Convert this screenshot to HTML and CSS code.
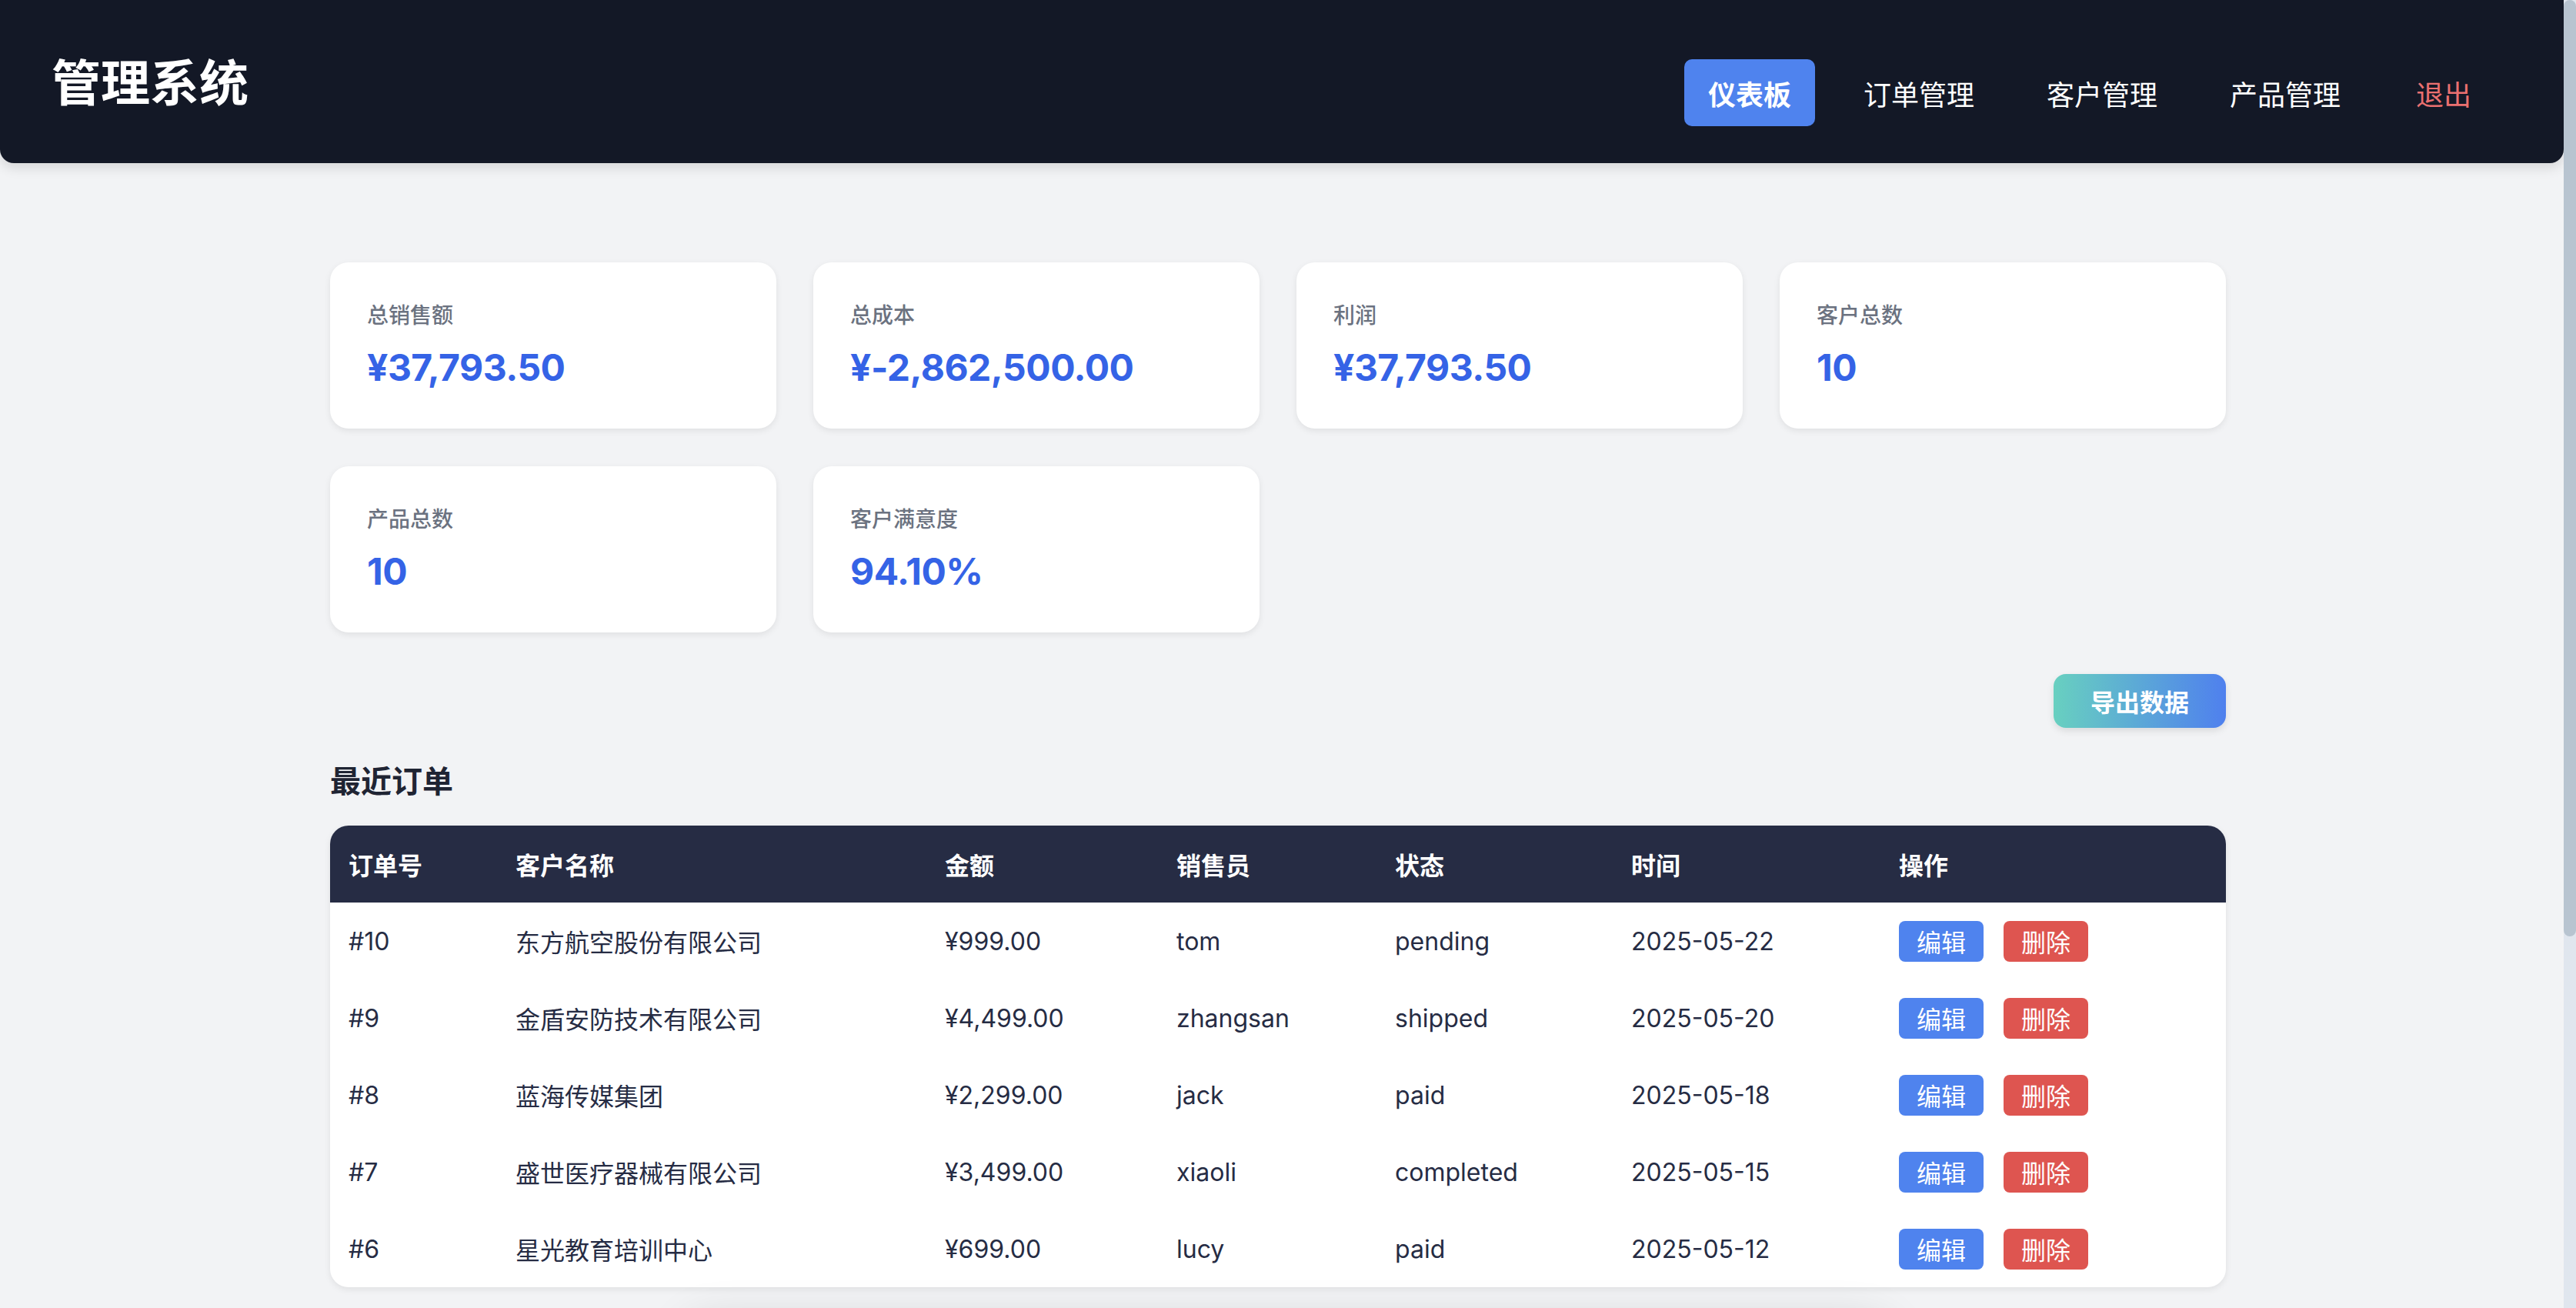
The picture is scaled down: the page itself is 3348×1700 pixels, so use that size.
FILE: index.html
```html
<!DOCTYPE html>
<html lang="zh-CN">
<head>
<meta charset="utf-8">
<title>管理系统</title>
<link rel="stylesheet" href="styles.css">
</head>
<body>
<header class="topbar">
  <h1 class="brand">管理系统</h1>
  <nav class="nav">
    <a class="nav-link active" href="#">仪表板</a>
    <a class="nav-link" href="#">订单管理</a>
    <a class="nav-link" href="#">客户管理</a>
    <a class="nav-link" href="#">产品管理</a>
    <a class="nav-link logout" href="#">退出</a>
  </nav>
</header>

<main class="main">
  <section class="stats">
    <div class="stat-card"><div class="stat-label">总销售额</div><div class="stat-value">¥37,793.50</div></div>
    <div class="stat-card"><div class="stat-label">总成本</div><div class="stat-value">¥-2,862,500.00</div></div>
    <div class="stat-card"><div class="stat-label">利润</div><div class="stat-value">¥37,793.50</div></div>
    <div class="stat-card"><div class="stat-label">客户总数</div><div class="stat-value">10</div></div>
    <div class="stat-card"><div class="stat-label">产品总数</div><div class="stat-value">10</div></div>
    <div class="stat-card"><div class="stat-label">客户满意度</div><div class="stat-value">94.10%</div></div>
  </section>

  <div class="toolbar">
    <button class="export-btn">导出数据</button>
  </div>

  <h2 class="section-title">最近订单</h2>

  <table class="orders">
    <thead>
      <tr>
        <th>订单号</th><th>客户名称</th><th>金额</th><th>销售员</th><th>状态</th><th>时间</th><th>操作</th>
      </tr>
    </thead>
    <tbody>
      <tr><td>#10</td><td>东方航空股份有限公司</td><td>¥999.00</td><td>tom</td><td>pending</td><td>2025-05-22</td><td><button class="btn btn-edit">编辑</button><button class="btn btn-delete">删除</button></td></tr>
      <tr><td>#9</td><td>金盾安防技术有限公司</td><td>¥4,499.00</td><td>zhangsan</td><td>shipped</td><td>2025-05-20</td><td><button class="btn btn-edit">编辑</button><button class="btn btn-delete">删除</button></td></tr>
      <tr><td>#8</td><td>蓝海传媒集团</td><td>¥2,299.00</td><td>jack</td><td>paid</td><td>2025-05-18</td><td><button class="btn btn-edit">编辑</button><button class="btn btn-delete">删除</button></td></tr>
      <tr><td>#7</td><td>盛世医疗器械有限公司</td><td>¥3,499.00</td><td>xiaoli</td><td>completed</td><td>2025-05-15</td><td><button class="btn btn-edit">编辑</button><button class="btn btn-delete">删除</button></td></tr>
      <tr><td>#6</td><td>星光教育培训中心</td><td>¥699.00</td><td>lucy</td><td>paid</td><td>2025-05-12</td><td><button class="btn btn-edit">编辑</button><button class="btn btn-delete">删除</button></td></tr>
    </tbody>
  </table>
</main>

<div class="bottom-panel"></div>

<div class="scrollbar"><div class="scrollbar-thumb"></div></div>
</body>
</html>
```

FILE: styles.css
```css
html {
  background: #f2f3f5;
}

body {
  margin: 0 16px 0 0;
  background: #f2f3f5;
  font-family: "Inter", "Noto Sans CJK SC", sans-serif;
  color: #262c44;
}

.topbar {
  display: flex;
  justify-content: space-between;
  align-items: flex-start;
  height: 212px;
  box-sizing: border-box;
  padding: 65px 89px 0 67px;
  background: #131826;
  border-radius: 0 0 18px 18px;
  box-shadow: 0 6px 16px rgba(0, 0, 0, 0.12);
}

.brand {
  margin: 0;
  font-size: 64px;
  line-height: 77px;
  font-weight: 700;
  color: #ffffff;
  font-family: "Noto Sans CJK SC", sans-serif;
}

.nav {
  display: flex;
  gap: 32px;
  margin-top: 12px;
}

.nav-link {
  display: flex;
  align-items: center;
  height: 87px;
  padding: 0 31px;
  font-size: 36px;
  color: #ffffff;
  text-decoration: none;
  border-radius: 10px;
  font-family: "Noto Sans CJK SC", sans-serif;
}

.nav-link.active {
  background: #4f83ee;
  font-weight: 700;
}

.nav-link.logout {
  margin-left: 4px;
  color: #ea7070;
}

.main {
  width: 2464px;
  margin-left: 429px;
  padding: 129px 0 700px;
}

.stats {
  display: grid;
  grid-template-columns: repeat(4, 1fr);
  gap: 49px 48px;
}

.stat-card {
  background: #ffffff;
  border-radius: 24px;
  padding: 46px 48px 48px;
  height: 216px;
  box-sizing: border-box;
  box-shadow: 0 3px 8px rgba(0, 0, 0, 0.08);
}

.stat-label {
  font-size: 28px;
  line-height: 42px;
  color: #6b7280;
  font-weight: 500;
  font-family: "Noto Sans CJK SC Medium", "Noto Sans CJK SC", sans-serif;
}

.stat-value {
  margin-top: 20px;
  font-size: 48px;
  line-height: 58px;
  font-weight: 700;
  color: #3563e6;
  letter-spacing: -0.5px;
}

.toolbar {
  display: flex;
  justify-content: flex-end;
  margin-top: 54px;
}

.export-btn {
  width: 224px;
  height: 70px;
  border: none;
  border-radius: 16px;
  background: linear-gradient(90deg, #68d0c0 0%, #4f80ee 100%);
  color: #ffffff;
  font-size: 32px;
  font-weight: 700;
  font-family: "Noto Sans CJK SC", sans-serif;
  box-shadow: 0 4px 10px rgba(0, 0, 0, 0.1);
  padding: 0;
}

.section-title {
  margin: 39px 0 32px;
  font-size: 40px;
  line-height: 56px;
  font-weight: 700;
  color: #1f2433;
  font-family: "Noto Sans CJK SC", sans-serif;
}

.orders {
  width: 100%;
  border-collapse: separate;
  border-spacing: 0;
  background: #ffffff;
  border-radius: 24px;
  overflow: hidden;
  table-layout: fixed;
  box-shadow: 0 3px 8px rgba(0, 0, 0, 0.08);
}

.orders th,
.orders td {
  height: 100px;
  padding: 0 24px;
  text-align: left;
  vertical-align: middle;
  font-size: 32px;
  white-space: nowrap;
}

.orders th {
  background: #262c44;
  color: #ffffff;
  font-weight: 700;
  font-family: "Noto Sans CJK SC", sans-serif;
}

.orders td {
  color: #262c44;
  font-weight: 400;
}

.orders th:nth-child(1) { width: 169px; }
.orders th:nth-child(2) { width: 510px; }
.orders th:nth-child(3) { width: 253px; }
.orders th:nth-child(4) { width: 236px; }
.orders th:nth-child(5) { width: 259px; }
.orders th:nth-child(6) { width: 300px; }

.btn {
  height: 53px;
  padding: 0 23px;
  margin-right: 26px;
  border: none;
  border-radius: 8px;
  color: #ffffff;
  font-size: 32px;
  line-height: 53px;
  font-family: "Noto Sans CJK SC", sans-serif;
  vertical-align: middle;
}

.btn-edit {
  background: #4f83ee;
}

.btn-delete {
  background: #de5550;
}

.bottom-panel {
  position: fixed;
  left: 50%;
  bottom: -140px;
  transform: translateX(-50%);
  width: 1560px;
  height: 120px;
  background: #f2f3f5;
  border-radius: 24px;
  box-shadow: 0 0 60px rgba(0, 0, 0, 0.16);
}

.scrollbar {
  position: fixed;
  top: 0;
  right: 0;
  width: 16px;
  height: 100vh;
  background: #e0e6ee;
}

.scrollbar-thumb {
  height: 1217px;
  border-radius: 8px;
  background: #b8c4d0;
}
```
